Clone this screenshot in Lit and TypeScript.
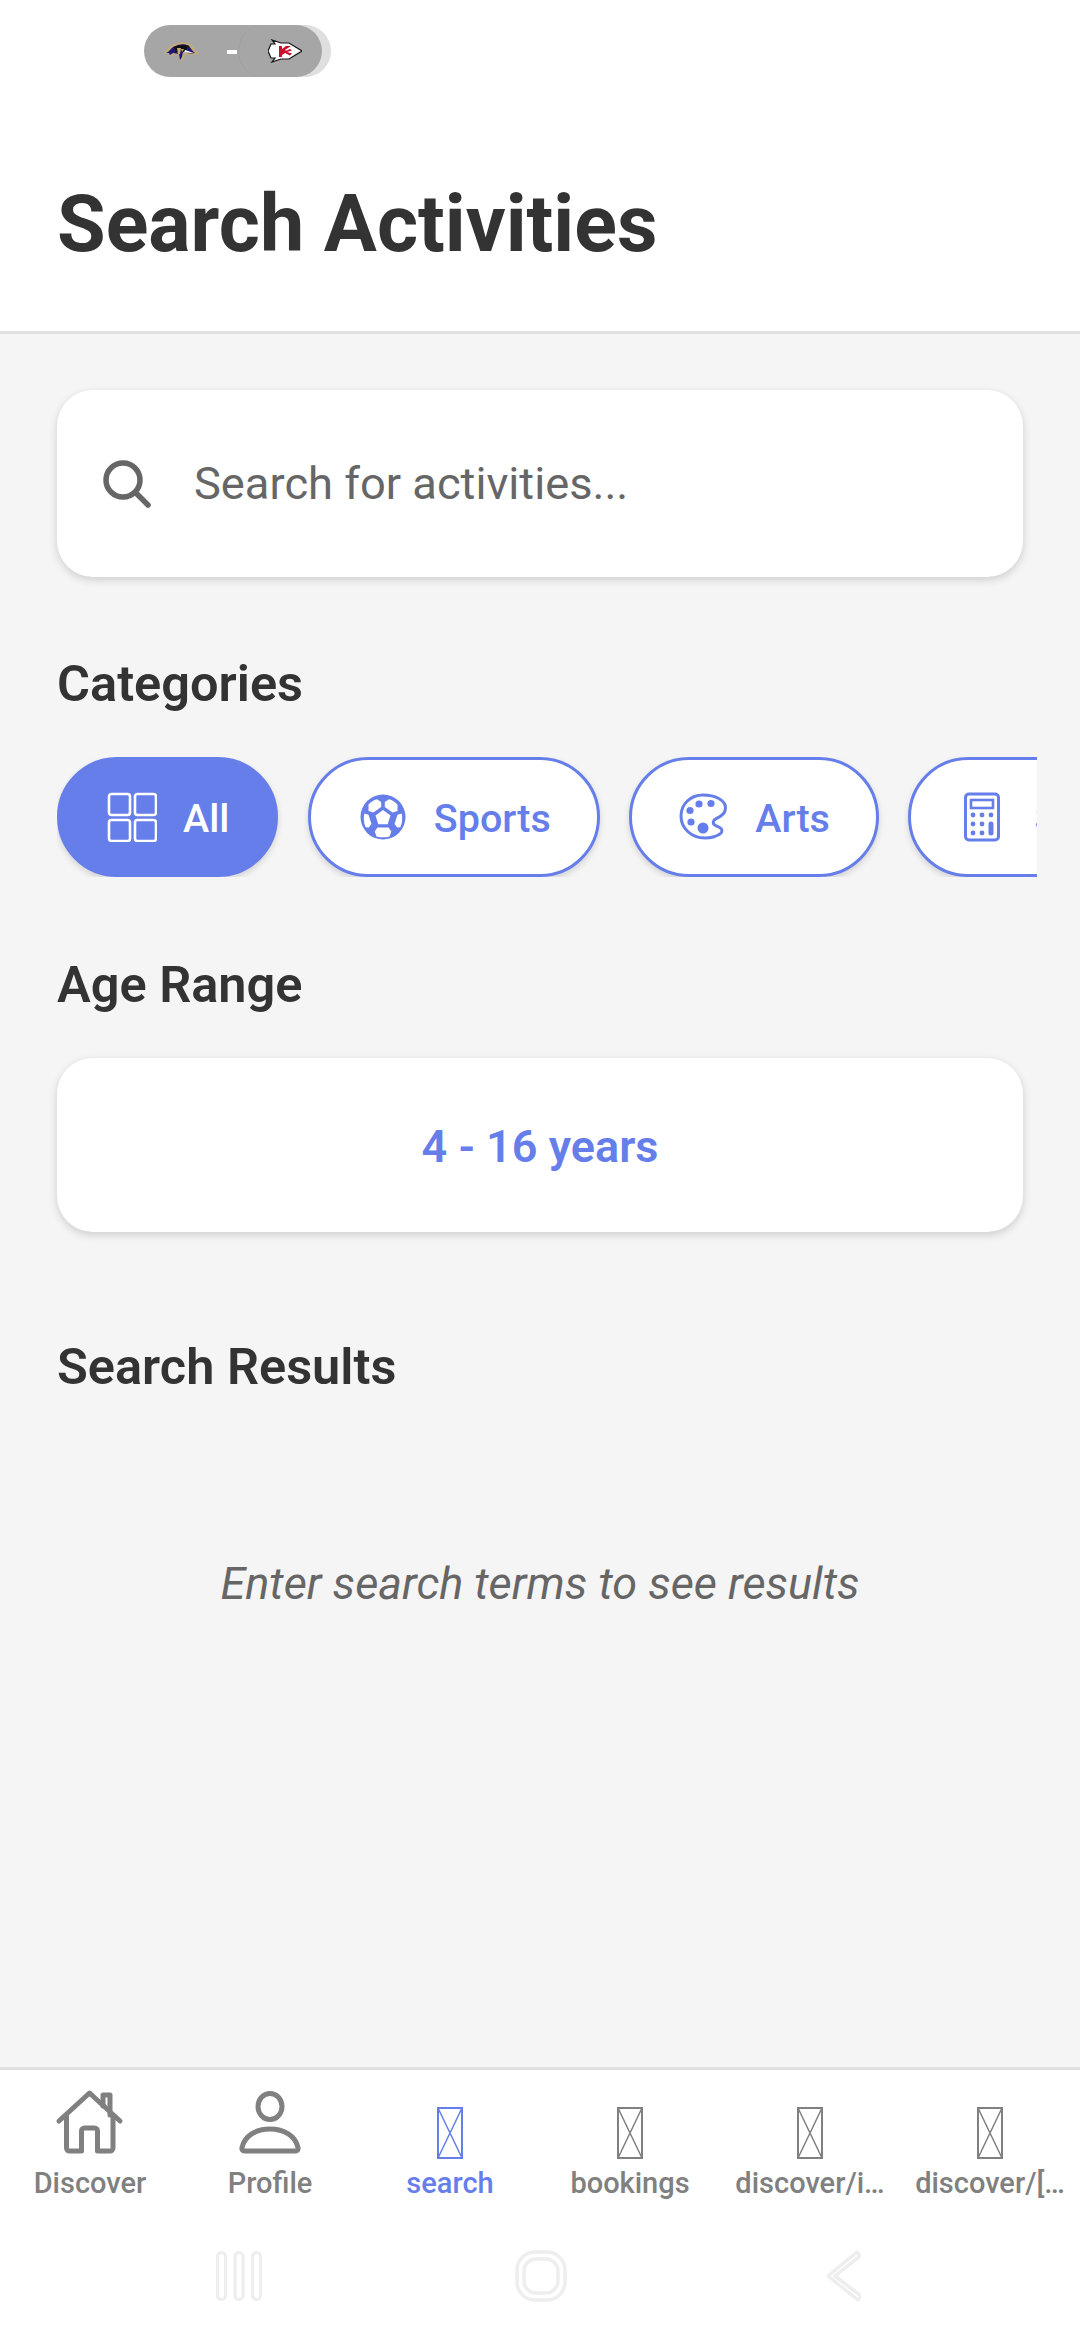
import { LitElement, html, css, svg } from "lit";
import { customElement } from "lit/decorators.js";

const categories = [
  { label: "All", icon: "grid", active: true },
  { label: "Sports", icon: "ball", active: false },
  { label: "Arts", icon: "palette", active: false },
  { label: "STEM", icon: "calc", active: false },
];

const tabs = [
  { label: "Discover", icon: "home", active: false },
  { label: "Profile", icon: "person", active: false },
  { label: "search", icon: "tofu", active: true },
  { label: "bookings", icon: "tofu", active: false },
  { label: "discover/i…", icon: "tofu", active: false },
  { label: "discover/[…", icon: "tofu", active: false },
];

const chipIcons: Record<string, unknown> = {
  grid: svg`<g fill="none" stroke="currentColor" stroke-width="2.6">
    <rect x="2" y="2" width="21" height="21" rx="2.5"/><rect x="28" y="2" width="21" height="21" rx="2.5"/>
    <rect x="2" y="28" width="21" height="21" rx="2.5"/><rect x="28" y="28" width="21" height="21" rx="2.5"/></g>`,
  ball: svg`<circle cx="25" cy="25" r="22.5" fill="currentColor"/>
    <g fill="#fff">
      <path d="M25 18l7.500 5.500-2.800 8.800h-9.400l-2.800-8.800z"/>
      <path d="M10.500 12.500c2.400-2.600 5.200-4.300 8.500-5.200l4.200 2.700v5l-7.800 5.600-4.900-1.600z"/>
      <path d="M39.500 12.500c-2.400-2.600-5.200-4.300-8.500-5.200l-4.200 2.700v5l7.800 5.600 4.900-1.600z"/>
      <path d="M6.300 21.500l4.200 1.300 3 9.200-2.700 3.500-3.200-.2c-1.800-4.100-2.300-9-1.300-13.800z"/>
      <path d="M43.700 21.500l-4.200 1.300-3 9.200 2.700 3.500 3.200-.2c1.800-4.100 2.300-9 1.300-13.800z"/>
      <path d="M19.500 35.500h11l2.800 4-1.800 4.900c-4.300 1.200-8.700 1.200-13 0l-1.800-4.900z"/>
    </g>`,
  palette: svg`<path d="M24 3C11.500 3 2 12 2 24c0 12 10 22 24 22 6 0 11-1.500 15-4 2.800-1.800 2.500-5-.3-6.500l-4.500-2.200c-2.800-1.500-2.400-5 .5-6.500l3.800-2c4-2.200 6-5 6-9C46.500 8 36 3 24 3z" fill="none" stroke="currentColor" stroke-width="3"/>
    <g fill="currentColor"><circle cx="20" cy="12" r="3.600"/><circle cx="32" cy="11.500" r="3.600"/><circle cx="11" cy="18.500" r="3.600"/><circle cx="12" cy="30" r="3.600"/><circle cx="24" cy="36" r="5.500"/></g>`,
  calc: svg`<rect x="7.500" y="2" width="33" height="46" rx="3.500" fill="none" stroke="currentColor" stroke-width="3"/>
    <rect x="13" y="8" width="22" height="8" fill="none" stroke="currentColor" stroke-width="2.600"/>
    <g fill="currentColor"><circle cx="15" cy="23" r="2.400"/><circle cx="24" cy="23" r="2.400"/><circle cx="33" cy="23" r="2.400"/>
    <circle cx="15" cy="32" r="2.400"/><circle cx="24" cy="32" r="2.400"/><circle cx="15" cy="41" r="2.400"/><circle cx="24" cy="41" r="2.400"/>
    <rect x="30.500" y="29.500" width="5" height="14" rx="2.500"/></g>`,
};

function tabIcon(name: string) {
  if (name === "home") {
    return html`<svg class="tab-svg" viewBox="0 0 72 72" width="72" height="72" fill="none" stroke="currentColor" stroke-width="5" stroke-linejoin="round" stroke-linecap="round">
      <path d="M5 34L35.500 6 66 34"/><path d="M49 19V8h7v20"/>
      <path d="M12.500 29v32a3 3 0 0 0 3 3h12V44a3 3 0 0 1 3-3h10a3 3 0 0 1 3 3v20h12.500a3 3 0 0 0 3-3V29"/>
    </svg>`;
  }
  if (name === "person") {
    return html`<svg class="tab-svg" viewBox="0 0 72 72" width="72" height="72" fill="none" stroke="currentColor" stroke-width="5" stroke-linejoin="round">
      <ellipse cx="36" cy="19.500" rx="12" ry="13"/>
      <path d="M11 64c-2 0-3.500-1-3-3.500C10.500 49 22 42 36 42s25.500 7 28 18.500c.5 2.500-1 3.500-3 3.500z"/>
    </svg>`;
  }
  return html`<svg class="tab-svg tofu" viewBox="0 0 26 52" width="26" height="52" fill="none" stroke="currentColor" stroke-width="1.500">
    <rect x="1" y="1" width="24" height="50" stroke-width="2"/><path d="M1 1l24 50M25 1L1 51"/>
  </svg>`;
}

@customElement("app-root")
export class AppRoot extends LitElement {
  static styles = css`
    :host {
      display: flex;
      flex-direction: column;
      width: 1080px;
      height: 2340px;
      background: #f5f5f5;
      font-family: Roboto, "Liberation Sans", sans-serif;
      color: #333;
    }

    .header {
      background: #fff;
      height: 334px;
      box-sizing: border-box;
      border-bottom: 3px solid #e0e0e0;
      padding: 25px 57px 0;
    }

    .score {
      position: relative;
      width: 178px;
      height: 52px;
      margin-left: 87px;
      border-radius: 26px;
      background: #a6a6a6;
      box-shadow: 9px 0 0 #dfdfdf;
    }

    .arc {
      position: absolute;
      left: 94px;
      top: 0;
      width: 84px;
      height: 52px;
      box-sizing: border-box;
      border-radius: 26px;
      border-left: 1px solid #9e9e9e;
    }

    .raven {
      position: absolute;
      left: 19px;
      top: 17px;
    }

    .dash {
      position: absolute;
      left: 83px;
      top: 25px;
      width: 10px;
      height: 4px;
      background: #fff;
    }

    .chiefs {
      position: absolute;
      left: 124px;
      top: 14px;
    }

    h1 {
      margin: 101px 0 0;
      font-size: 79px;
      line-height: 92px;
      font-weight: 700;
      color: #333;
    }

    .main {
      flex: 1;
      padding: 56px 57px 0;
      min-height: 0;
    }

    .search {
      display: flex;
      align-items: center;
      gap: 43px;
      height: 187px;
      box-sizing: border-box;
      padding: 0 46px;
      background: #fff;
      border-radius: 36px;
      box-shadow: 0 3px 9px rgba(0, 0, 0, 0.16);
      font-size: 45.25px;
      color: #666;
    }

    h2 {
      margin: 0;
      font-size: 50.5px;
      line-height: 58px;
      font-weight: 600;
      color: #333;
    }

    .cat-title {
      margin-top: 78px;
    }

    .chips {
      display: flex;
      gap: 29.5px;
      width: 980px;
      height: 120px;
      margin-top: 44px;
      overflow: hidden;
    }

    .chip {
      flex: none;
      display: flex;
      align-items: center;
      gap: 26px;
      height: 120px;
      box-sizing: border-box;
      padding: 0 46px 0 47px;
      border: 3px solid #667eea;
      border-radius: 60px;
      background: #fff;
      color: #667eea;
      font-size: 39.5px;
      font-weight: 500;
      box-shadow: 0 3px 6px rgba(0, 0, 0, 0.14);
    }

    .chip span {
      padding-top: 2px;
    }

    .chip.active {
      background: #667eea;
      color: #fff;
    }

    .age-title {
      margin-top: 79px;
    }

    .age {
      display: flex;
      align-items: center;
      justify-content: center;
      height: 174px;
      margin-top: 44px;
      padding-top: 3px;
      box-sizing: border-box;
      background: #fff;
      border-radius: 36px;
      box-shadow: 0 3px 9px rgba(0, 0, 0, 0.16);
      color: #667eea;
      font-size: 45px;
      font-weight: 600;
    }

    .res-title {
      margin-top: 106px;
    }

    .empty {
      margin-top: 163px;
      text-align: center;
      font-size: 45px;
      line-height: 50px;
      font-style: italic;
      color: #666;
    }

    .tabbar {
      display: grid;
      grid-template-columns: repeat(6, 180px);
      height: 150px;
      box-sizing: border-box;
      background: #fff;
      border-top: 3px solid #e0e0e0;
    }

    .tab {
      display: flex;
      flex-direction: column;
      align-items: center;
      color: #808080;
      font-size: 29px;
      font-weight: 500;
      line-height: 36px;
      white-space: nowrap;
    }

    .tab.active {
      color: #667eea;
    }

    .tab-icon {
      display: flex;
      align-items: center;
      justify-content: center;
      height: 72px;
      margin: 17px 0 6px;
    }

    .tofu {
      margin-top: 20px;
    }

    .navbar {
      display: flex;
      justify-content: center;
      align-items: center;
      gap: 253px;
      height: 123px;
      padding-bottom: 5px;
      box-sizing: border-box;
      background: #fff;
      color: #eeeeee;
    }

    .nav-back {
      margin: 0 3px 0 5px;
    }
  `;

  render() {
    return html`
      <div class="header">
        <div class="score">
          <span class="arc"></span>
          <svg class="raven" viewBox="0 0 36 20" width="36" height="20">
            <path d="M0 11c4-1 5-5 8-7 6-4 15-5 20-1 3 2 4 6 8 9-5 1-10 1-14 0l-1 4-3 4-1-7-6-1-3 3-2-4z" fill="#c8ad72"/>
            <path d="M3 11c3-1 4-4 7-6 5-3 12-4 16-1 2 2 3 5 6 7-4 1-9 0-12-1l-1 5-2 3-1-6-6-1-3 2-1-2z" fill="#241773"/>
            <path d="M11 5c4-2 11-3 15-1l-4 5-9 1z" fill="#111"/>
            <path d="M14 6h4l-1 6h-2zM18 7h3l-2 3z" fill="#c8ad72"/>
            <path d="M22 8l9 3-10-.5z" fill="#fff"/>
          </svg>
          <span class="dash"></span>
          <svg class="chiefs" viewBox="0 0 34 24" width="34" height="24">
            <path d="M4 1l3 4-4 0-3 7 3 7 4 0-3 4 9-3h8l13-8-13-8h-8z" fill="#fff" stroke="#111" stroke-width="1.200"/>
            <path d="M11 7h3v3l4-3h5l-6 4 1 .8 4-1.800 2 1.500-5 1.500 5 1.500-2 2-5-2.500-3 2v2h-3z" fill="#c8102e"/>
          </svg>
        </div>
        <h1>Search Activities</h1>
      </div>

      <div class="main">
        <div class="search">
          <svg viewBox="0 0 48 48" width="48" height="48" fill="none" stroke="#666" stroke-width="5.500" stroke-linecap="round">
            <circle cx="20" cy="20" r="17"/><path d="M32.500 32.500L45 45"/>
          </svg>
          <span>Search for activities...</span>
        </div>

        <h2 class="cat-title">Categories</h2>
        <div class="chips">
          ${categories.map(
            (c) => html`
              <div class="chip ${c.active ? "active" : ""}">
                <svg viewBox="0 0 50 50" width="50" height="50">${chipIcons[c.icon]}</svg>
                <span>${c.label}</span>
              </div>
            `
          )}
        </div>

        <h2 class="age-title">Age Range</h2>
        <div class="age">4 - 16 years</div>

        <h2 class="res-title">Search Results</h2>
        <div class="empty">Enter search terms to see results</div>
      </div>

      <div class="tabbar">
        ${tabs.map(
          (t) => html`
            <div class="tab ${t.active ? "active" : ""}">
              <div class="tab-icon">${tabIcon(t.icon)}</div>
              <span>${t.label}</span>
            </div>
          `
        )}
      </div>

      <div class="navbar">
        <svg viewBox="0 0 46 50" width="46" height="50" fill="none" stroke="currentColor" stroke-width="3">
          <rect x="1.500" y="1.500" width="8" height="47" rx="4"/><rect x="19" y="1.500" width="8" height="47" rx="4"/><rect x="36.500" y="1.500" width="8" height="47" rx="4"/>
        </svg>
        <svg viewBox="0 0 52 52" width="52" height="52" fill="none" stroke="currentColor" stroke-width="3.500">
          <rect x="2" y="2" width="48" height="48" rx="18"/><rect x="9" y="9" width="34" height="34" rx="12"/>
        </svg>
        <svg class="nav-back" viewBox="0 0 36 52" width="36" height="52" fill="none" stroke="currentColor" stroke-width="3.500" stroke-linejoin="round">
          <path d="M32 2L3 26l30 24 3-4L10 26 35 6z"/>
        </svg>
      </div>
    `;
  }
}
